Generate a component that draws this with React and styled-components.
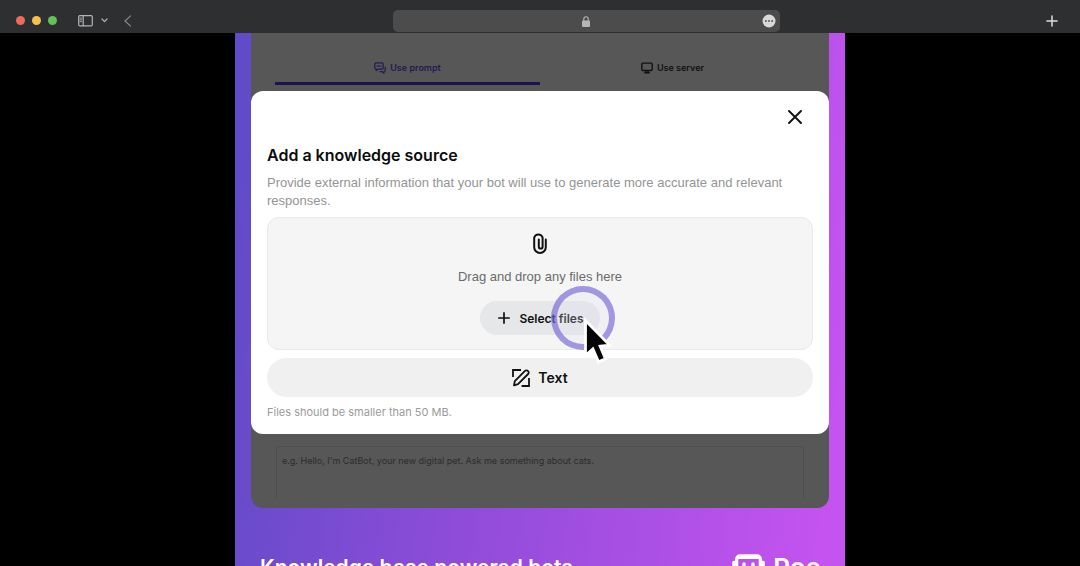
import React from "react";
import styled, { createGlobalStyle } from "styled-components";

const Global = createGlobalStyle`
  *, *::before, *::after { box-sizing: border-box; }
  body { margin: 0; background: #000; font-family: Inter, "Liberation Sans", sans-serif; }
  button, textarea, input { font: inherit; color: inherit; }
  button { border: 0; padding: 0; background: none; cursor: pointer; }
  h2, p { margin: 0; }
  svg { display: block; flex: none; }
`;

const Page = styled.div`
  height: 100vh;
  overflow: hidden;
  display: flex;
  flex-direction: column;
`;

const Toolbar = styled.header`
  flex: none;
  display: grid;
  grid-template-columns: 4fr 37% 3fr;
  align-items: end;
  gap: 4px;
  padding: 9px 16px 1px;
  height: 33px;
  background: #2e2f31;
`;

const ToolGroup = styled.div`
  display: flex;
  align-items: center;
  justify-content: ${(p) => p.$align || "flex-start"};
  height: 23px;
  padding-right: ${(p) => (p.$align ? "6px" : 0)};
`;

const Lights = styled.div`
  display: flex;
  gap: 7px;
  margin-right: 21px;
`;

const Light = styled.span`
  width: 9px;
  height: 9px;
  border-radius: 50%;
  background: ${(p) => p.$color};
`;

const ToolButton = styled.button`
  color: ${(p) => p.$color || "#b4b4b6"};
  margin-right: ${(p) => p.$gap || 0}px;
`;

const AddressBar = styled.div`
  display: flex;
  align-items: center;
  height: 22px;
  padding-right: 4px;
  border-radius: 5px;
  background: #4c4c4c;
`;

const AddressField = styled.div`
  flex: 1;
  display: flex;
  justify-content: center;
  padding-left: 16px;
`;

const Stage = styled.main`
  flex: 1;
  min-height: 0;
  display: flex;
  justify-content: center;
  align-items: flex-start;
`;

const Poster = styled.section`
  width: 100%;
  max-width: 610px;
  padding: 0 16px;
  background: linear-gradient(98deg, #624bc8 4%, #8e4cd8 42%, #c553f0 96%);
`;

const Card = styled.div`
  border-radius: 0 0 12px 12px;
  background: #575757;
`;

const Tabs = styled.nav`
  display: flex;
  padding: 20px 24px 6px;
`;

const Tab = styled.button`
  flex: 1;
  display: flex;
  align-items: center;
  justify-content: center;
  gap: 4px;
  height: 32px;
  font-size: 9px;
  line-height: 12px;
  font-weight: 600;
  color: ${(p) => (p.$active ? "#251951" : "#111")};
  border-bottom: 3px solid ${(p) => (p.$active ? "#20124c" : "transparent")};
`;

const Dialog = styled.section`
  padding: 12px 16px 14px;
  border-radius: 12px;
  background: #fff;
`;

const DialogTop = styled.div`
  display: flex;
  justify-content: flex-end;
  padding-right: 4px;
`;

const CloseButton = styled.button`
  display: grid;
  place-items: center;
  width: 28px;
  height: 28px;
  color: #111;
`;

const Title = styled.h2`
  margin-top: 12px;
  font-size: 16px;
  line-height: 24px;
  font-weight: 600;
  color: #0c0c0c;
`;

const Description = styled.p`
  margin: 7px 0;
  font-family: "Liberation Sans", Arial, sans-serif;
  font-size: 13px;
  line-height: 18px;
  color: #949494;
`;

const DropZone = styled.div`
  display: flex;
  flex-direction: column;
  align-items: center;
  padding: 14px 0;
  border: 1px solid #e9e9e9;
  border-radius: 12px;
  background: #f5f5f5;
  color: #111;
`;

const DropHint = styled.p`
  margin: 14px 0 15px;
  font-family: "Liberation Sans", Arial, sans-serif;
  font-size: 13px;
  line-height: 18px;
  color: #6b6b6b;
`;

const SelectWrap = styled.div`
  position: relative;
`;

const SelectButton = styled.button`
  display: flex;
  align-items: center;
  gap: 9px;
  height: 34px;
  padding: 0 16px 0 18px;
  border-radius: 17px;
  background: #e6e7e8;
  font-size: 12px;
  font-weight: 600;
  color: #111;
`;

const ClickRing = styled.span`
  position: absolute;
  top: -15px;
  right: -15px;
  width: 64px;
  height: 64px;
  border: 6px solid rgba(116, 100, 216, 0.66);
  border-radius: 50%;
  background: rgba(222, 224, 245, 0.25);
  background-clip: padding-box;
  pointer-events: none;
`;

const Pointer = styled.svg`
  position: absolute;
  top: 16px;
  right: -13px;
  pointer-events: none;
`;

const TextButton = styled.button`
  display: flex;
  align-items: center;
  justify-content: center;
  gap: 8px;
  width: 100%;
  height: 39px;
  margin-top: 8px;
  border-radius: 20px;
  background: #f0f0f0;
  font-size: 14px;
  font-weight: 600;
  color: #111;
`;

const Note = styled.p`
  margin-top: 7px;
  font-size: 11px;
  line-height: 16px;
  color: #9b9b9b;
`;

const FieldArea = styled.div`
  padding: 12px 25px 10px;
`;

const Greeting = styled.textarea`
  display: block;
  width: 100%;
  height: 52px;
  padding: 8px 5px;
  border: 1px solid #4e4e4e;
  border-bottom: 0;
  border-radius: 3px 3px 0 0;
  outline: 0;
  resize: none;
  background: transparent;
  font-size: 9px;
  line-height: 12px;
  &::placeholder { color: #2c2c2c; opacity: 1; }
`;

const Caption = styled.footer`
  display: flex;
  align-items: center;
  justify-content: space-between;
  padding: 42px 8px 20px 9px;
  color: #fff;
  font-size: 21px;
  line-height: 36px;
  font-weight: 600;
`;

const Brand = styled.div`
  display: flex;
  align-items: center;
  gap: 8px;
  font-size: 26px;
`;

const line = { fill: "none", stroke: "currentColor", strokeLinecap: "round", strokeLinejoin: "round" };

const SidebarIcon = () => (
  <svg width="15" height="12" viewBox="0 0 15 12" {...line} strokeWidth="1.2">
    <rect x="0.7" y="0.7" width="13.6" height="10.2" rx="1.2" />
    <path d="M5.2 1v9.8" />
    <path d="M2 3h1.6M2 4.8h1.6M2 6.6h1.6" strokeWidth="0.9" />
  </svg>
);

const ChevronDown = () => (
  <svg width="7" height="5" viewBox="0 0 7 5" {...line} strokeWidth="1.2">
    <path d="M1 1l2.5 2.6L6 1" />
  </svg>
);

const ChevronLeft = () => (
  <svg width="8" height="12" viewBox="0 0 8 12" {...line} strokeWidth="1.1">
    <path d="M6.6 0.8L1 6l5.6 5.2" />
  </svg>
);

const LockIcon = () => (
  <svg width="8" height="11" viewBox="0 0 8 11">
    <rect y="4.6" width="8" height="6.4" rx="1" fill="#b6b6b6" />
    <path d="M1.8 5V3a2.2 2.2 0 0 1 4.4 0v2" fill="none" stroke="#b6b6b6" strokeWidth="1.1" />
  </svg>
);

const MoreIcon = () => (
  <svg width="14" height="14" viewBox="0 0 14 14">
    <circle cx="7" cy="7" r="6.5" fill="#d8d8d8" />
    <g fill="#4c4c4c">
      <circle cx="3.9" cy="7" r="0.9" />
      <circle cx="7" cy="7" r="0.9" />
      <circle cx="10.1" cy="7" r="0.9" />
    </g>
  </svg>
);

const PlusIcon = ({ width = 1.7 }) => (
  <svg width="12" height="12" viewBox="0 0 12 12" {...line} strokeWidth={width}>
    <path d="M6 0.9v10.2M0.9 6h10.2" />
  </svg>
);

const ChatsIcon = () => (
  <svg width="12" height="12" viewBox="0 0 12 12" {...line} strokeWidth="1.2">
    <path d="M2.2 0.8h5.6a1.4 1.4 0 0 1 1.4 1.4v3.5a1.4 1.4 0 0 1-1.4 1.4H4.2L2.3 8.6V7.1A1.4 1.4 0 0 1 0.8 5.7V2.2A1.4 1.4 0 0 1 2.2 0.8z" />
    <path d="M3 4h4M11.2 5v3.4a1.2 1.2 0 0 1-1.2 1.2v1.6L8.2 9.6H6" />
  </svg>
);

const MonitorIcon = () => (
  <svg width="12" height="12" viewBox="0 0 12 12" {...line} strokeWidth="1.4">
    <rect x="0.8" y="1.1" width="10.4" height="7.4" rx="1.2" />
    <path d="M4.9 8.8v1.6M7.1 8.8v1.6M3.8 10.7h4.4" />
  </svg>
);

const CloseIcon = () => (
  <svg width="14" height="14" viewBox="0 0 14 14" {...line} strokeWidth="1.9">
    <path d="M1 1l12 12M13 1L1 13" />
  </svg>
);

const ClipIcon = () => (
  <svg width="14" height="22" viewBox="0 0 14 22" {...line} strokeWidth="2">
    <path d="M12.8 7.4v7.8a5.8 5.8 0 0 1-11.6 0V5.5a4.4 4.4 0 0 1 8.4 0v9.2a1.9 1.9 0 0 1-3.8 0V7.4" />
  </svg>
);

const ComposeIcon = () => (
  <svg width="18" height="18" viewBox="0 0 18 18" fill="none" stroke="currentColor" strokeWidth="1.8">
    <path d="M1 8V1h8M9.6 17H17V9" />
    <path
      d="M2 16.4l.8-4.3L13 1.9a2 2 0 0 1 2.9 0l.2.2a2 2 0 0 1 0 2.9L6 15.2z"
      strokeLinejoin="round"
    />
  </svg>
);

const BotIcon = () => (
  <svg width="33" height="30" viewBox="0 0 33 30" {...line} strokeWidth="3.4">
    <path d="M8 2.9h17a3.4 3.4 0 0 1 3.4 3.4v11.6a3.4 3.4 0 0 1-3.4 3.4H11l-4 5v-5a3.4 3.4 0 0 1-2.4-3.4V6.3A3.4 3.4 0 0 1 8 2.9z" />
    <path d="M7 4.4h19" />
    <path d="M1.9 9.5v6M31.1 9.5v6M12 11v3M21 11v3" />
  </svg>
);

export default function App() {
  return (
    <Page>
      <Global />
      <Toolbar>
        <ToolGroup>
          <Lights>
            <Light $color="#ed6a5e" />
            <Light $color="#f5bf4f" />
            <Light $color="#61c554" />
          </Lights>
          <ToolButton aria-label="Sidebar" $gap={8}><SidebarIcon /></ToolButton>
          <ToolButton aria-label="Tab groups" $gap={16}><ChevronDown /></ToolButton>
          <ToolButton aria-label="Back" $color="#8c8c8e"><ChevronLeft /></ToolButton>
        </ToolGroup>
        <AddressBar>
          <AddressField><LockIcon /></AddressField>
          <ToolButton aria-label="More"><MoreIcon /></ToolButton>
        </AddressBar>
        <ToolGroup $align="flex-end">
          <ToolButton aria-label="New tab" $color="#dededf"><PlusIcon width={1.5} /></ToolButton>
        </ToolGroup>
      </Toolbar>
      <Stage>
        <Poster>
          <Card>
            <Tabs>
              <Tab $active><ChatsIcon />Use prompt</Tab>
              <Tab><MonitorIcon />Use server</Tab>
            </Tabs>
            <Dialog role="dialog" aria-labelledby="source-title">
              <DialogTop>
                <CloseButton aria-label="Close"><CloseIcon /></CloseButton>
              </DialogTop>
              <Title id="source-title">Add a knowledge source</Title>
              <Description>
                Provide external information that your bot will use to generate more accurate and relevant responses.
              </Description>
              <DropZone>
                <ClipIcon />
                <DropHint>Drag and drop any files here</DropHint>
                <SelectWrap>
                  <SelectButton><PlusIcon />Select files</SelectButton>
                  <ClickRing />
                  <Pointer width="30" height="50" viewBox="0 0 30 50">
                    <path
                      d="M2.5 3.5v35l7.4-6.6 5.6 13 7-3-5.4-12.8 9.4-1z"
                      fill="#050505"
                      stroke="#fff"
                      strokeWidth="2.8"
                    />
                  </Pointer>
                </SelectWrap>
              </DropZone>
              <TextButton><ComposeIcon />Text</TextButton>
              <Note>Files should be smaller than 50 MB.</Note>
            </Dialog>
            <FieldArea>
              <Greeting
                aria-label="Greeting message"
                placeholder="e.g. Hello, I'm CatBot, your new digital pet. Ask me something about cats."
              />
            </FieldArea>
          </Card>
          <Caption>
            <span>Knowledge base powered bots</span>
            <Brand><BotIcon />Poe</Brand>
          </Caption>
        </Poster>
      </Stage>
    </Page>
  );
}
